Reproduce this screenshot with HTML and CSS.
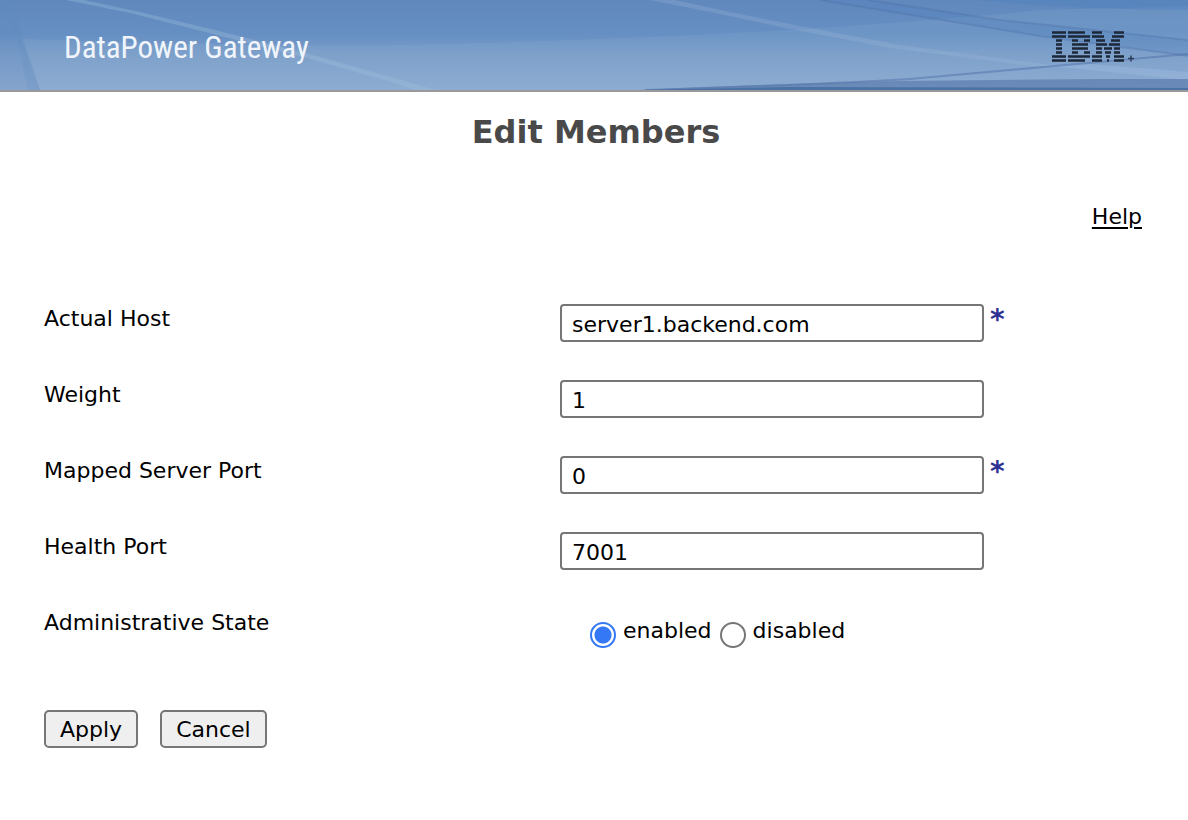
FILE: index.html
```html
<!DOCTYPE html>
<html lang="en">
<head>
<meta charset="utf-8">
<title>Edit Members</title>
<link rel="stylesheet" href="styles.css">
</head>
<body>
<header class="banner">
  <svg class="banner-art" viewBox="0 0 1188 90" preserveAspectRatio="none" aria-hidden="true">
    <defs>
      <linearGradient id="sky" x1="0" y1="0" x2="0" y2="1">
        <stop offset="0" stop-color="#6088bd"/>
        <stop offset="0.38" stop-color="#668fc3"/>
        <stop offset="0.6" stop-color="#7a9cc9"/>
        <stop offset="1" stop-color="#8fabd2"/>
      </linearGradient>
    </defs>
    <rect width="1188" height="90" fill="url(#sky)"/>
    <path d="M0 0H8L40 90H0Z" fill="#5d8cc0" opacity="0.2"/>
    <path d="M8 0H12L40 90H28Z" fill="#5d8cc0" opacity="0.2"/>
    <path d="M22 39Q200 46 400 45Q600 41 788 30Q940 20 1040 10L1188 6V90H40Z" fill="#8db2d4" opacity="0.2"/>
    <path d="M66 0H84L140 12L215 30L320 57L405 81L435 90H415L395 83L310 59L205 32L130 13Z" fill="#a2c3dd" opacity="0.32"/>
    <path d="M650 0H675L730 12L800 26L900 45L1060 66H1030L890 48L790 29L715 13Z" fill="#a2bddb" opacity="0.25"/>
    <path d="M1050 66L1188 80V72L1090 64Z" fill="#a5c1e5" opacity="0.35"/>
    <path d="M820 0H868L1000 20L1188 40V56L1040 36Z" fill="#4e7fba" opacity="0.28"/>
    <path d="M975 0H1188V10Q1080 10 975 0Z" fill="#5282bd" opacity="0.5"/>
    <path d="M820 0L1040 36L1188 56M868 0L1000 20L1188 40" fill="none" stroke="#506fa7" stroke-width="2" opacity="0.35"/>
    <path d="M645 90Q790 86 910 79Q1060 66 1188 54" fill="none" stroke="#506fa7" stroke-width="2" opacity="0.5"/>
    <path d="M640 90Q760 84 900 81L1100 79H1188V90Z" fill="#587aab" opacity="0.65"/>
    <path d="M640 90L790 87L1188 88V90Z" fill="#3f66a0" opacity="0.7"/>
  </svg>
  <div class="product">DataPower Gateway</div>
  <svg class="logo" viewBox="0 0 84 32" role="img" aria-label="IBM">
    <g fill="none" stroke="#1c2738" stroke-width="2.7">
      <path d="M0 1.5H14M16 1.5H33M40 1.5H50M62 1.5H72"/>
      <path d="M0 5.5H14M16 5.5H38M40 5.5H52M60 5.5H72"/>
      <path d="M4 9.5H10M20 9.5H26M32 9.5H38M44 9.5H53M59 9.5H68"/>
      <path d="M4 13.5H10M20 13.5H36M44 13.5H55M57 13.5H68"/>
      <path d="M4 17.5H10M20 17.5H36M44 17.5H50M52 17.5H60M62 17.5H68"/>
      <path d="M4 21.5H10M20 21.5H26M32 21.5H38M44 21.5H50M53 21.5H59M62 21.5H68"/>
      <path d="M0 25.5H14M16 25.5H38M40 25.5H50M54 25.5H58M62 25.5H72"/>
      <path d="M0 29.5H14M16 29.5H33M40 29.5H50M55 29.5H57M62 29.5H72"/>
    </g>
    <path d="M79 24.5V30.5M76 27.5H82" stroke="#2b3e59" stroke-width="1.5"/>
  </svg>
</header>
<main class="page">
  <h1 class="title">Edit Members</h1>
  <nav class="help"><a class="help-link" href="#help">Help</a></nav>
  <form class="form">
    <div class="row">
      <label class="label" for="host">Actual Host</label>
      <div class="field"><input class="text" id="host" type="text" value="server1.backend.com" required><span class="required">*</span></div>
    </div>
    <div class="row">
      <label class="label" for="weight">Weight</label>
      <div class="field"><input class="text" id="weight" type="text" value="1"></div>
    </div>
    <div class="row">
      <label class="label" for="mapped">Mapped Server Port</label>
      <div class="field"><input class="text" id="mapped" type="text" value="0" required><span class="required">*</span></div>
    </div>
    <div class="row">
      <label class="label" for="health">Health Port</label>
      <div class="field"><input class="text" id="health" type="text" value="7001"></div>
    </div>
    <div class="row" role="radiogroup" aria-labelledby="state">
      <span class="label" id="state">Administrative State</span>
      <div class="choices">
        <input class="radio" id="enabled" type="radio" name="state" checked><label class="choice" for="enabled">enabled</label>
        <input class="radio" id="disabled" type="radio" name="state"><label class="choice" for="disabled">disabled</label>
      </div>
    </div>
    <div class="actions">
      <button class="button" type="button">Apply</button>
      <button class="button" type="button">Cancel</button>
    </div>
  </form>
</main>
</body>
</html>
```
FILE: styles.css
```css
* {
  box-sizing: border-box;
}

body {
  margin: 0;
  background: #fff;
  color: #000;
  font: 22px/30px Verdana, "DejaVu Sans", sans-serif;
}

.banner {
  position: relative;
  display: flex;
  align-items: center;
  justify-content: space-between;
  height: 92px;
  padding: 4px 52px 0 64px;
  border-bottom: 2px solid #999;
}

.banner-art {
  position: absolute;
  inset: 0;
  width: 100%;
  height: 100%;
}

.product {
  position: relative;
  padding-top: 2px;
  color: #f1f5fb;
  font: 31px/40px "Roboto Condensed", "Arial Narrow", "Liberation Sans", sans-serif;
}

.logo {
  position: relative;
  width: 84px;
  height: 32px;
}

.page {
  padding: 20px 46px 20px 50px;
}

.title {
  margin: 0;
  color: #494949;
  font-size: 32px;
  line-height: 40px;
  text-align: center;
}

.help {
  margin-top: 50px;
  text-align: right;
}

.help-link {
  color: #000;
  text-underline-offset: 3px;
}

.form {
  margin: 72px 0 0 -6px;
}

.row {
  display: grid;
  grid-template-columns: 47% 1fr;
  align-items: start;
  min-height: 76px;
}

.field {
  display: flex;
  align-items: flex-start;
  gap: 6px;
}

.text {
  width: 424px;
  height: 38px;
  padding: 2px 10px 0;
  border: 2px solid #767676;
  border-radius: 4px;
  background: #fff;
  color: #000;
  font: inherit;
}

.required {
  color: #2e3192;
  font-size: 28px;
  font-weight: bold;
  line-height: 32px;
}

.choices {
  display: flex;
  align-items: flex-start;
  padding: 8px 0 0 30px;
}

.choice {
  margin: 0 8px 0 7px;
}

.radio {
  appearance: none;
  width: 26px;
  height: 26px;
  margin: 6px 0 0;
  border: 2px solid #767676;
  border-radius: 50%;
  background: #fff;
}

.radio:checked {
  border-color: #3478f6;
  background: radial-gradient(circle, #3478f6 8px, #fff 9px);
}

.actions {
  display: flex;
  gap: 22px;
  margin-top: 26px;
}

.button {
  height: 38px;
  padding: 2px 14px 0;
  border: 2px solid #767676;
  border-radius: 5px;
  background: #efefef;
  color: #000;
  font: inherit;
}
```
